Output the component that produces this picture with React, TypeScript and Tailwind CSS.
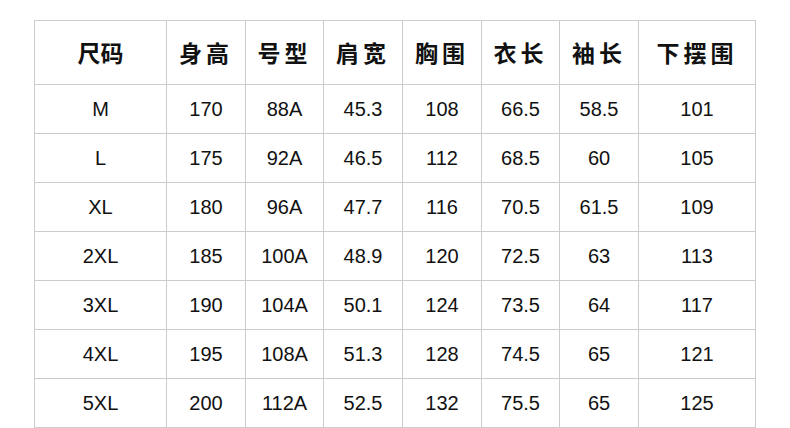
import React from "react";

const headers = ["尺码", "身高", "号型", "肩宽", "胸围", "衣长", "袖长", "下摆围"];
const rows = [
  ["M", "170", "88A", "45.3", "108", "66.5", "58.5", "101"],
  ["L", "175", "92A", "46.5", "112", "68.5", "60", "105"],
  ["XL", "180", "96A", "47.7", "116", "70.5", "61.5", "109"],
  ["2XL", "185", "100A", "48.9", "120", "72.5", "63", "113"],
  ["3XL", "190", "104A", "50.1", "124", "73.5", "64", "117"],
  ["4XL", "195", "108A", "51.3", "128", "74.5", "65", "121"],
  ["5XL", "200", "112A", "52.5", "132", "75.5", "65", "125"],
];

export default function App() {
  return (
    <div className="w-[790px] h-[428px] bg-white pt-[20px] pl-[34px]">
      <div className="grid grid-cols-[132px_79px_78px_79px_79px_78px_79px_117px] w-max border-l border-t border-[#cccccc]">
        {headers.map((h, i) => (
          <div
            key={h}
            className={`h-[64px] flex items-center justify-center border-r border-b border-[#cccccc] text-[23px] font-bold text-[#111] ${i === 0 ? "" : "tracking-[4px]"}`}
            style={{ fontFamily: '"Noto Sans CJK SC", "Noto Sans", sans-serif' }}
          >
            {h}
          </div>
        ))}
        {rows.map((r, ri) =>
          r.map((c, ci) => (
            <div
              key={ri + "-" + ci}
              className="h-[49px] flex items-center justify-center border-r border-b border-[#cccccc] text-[20px] text-[#111]"
              style={{ fontFamily: '"Liberation Sans", Arial, sans-serif' }}
            >
              {c}
            </div>
          ))
        )}
      </div>
    </div>
  );
}
